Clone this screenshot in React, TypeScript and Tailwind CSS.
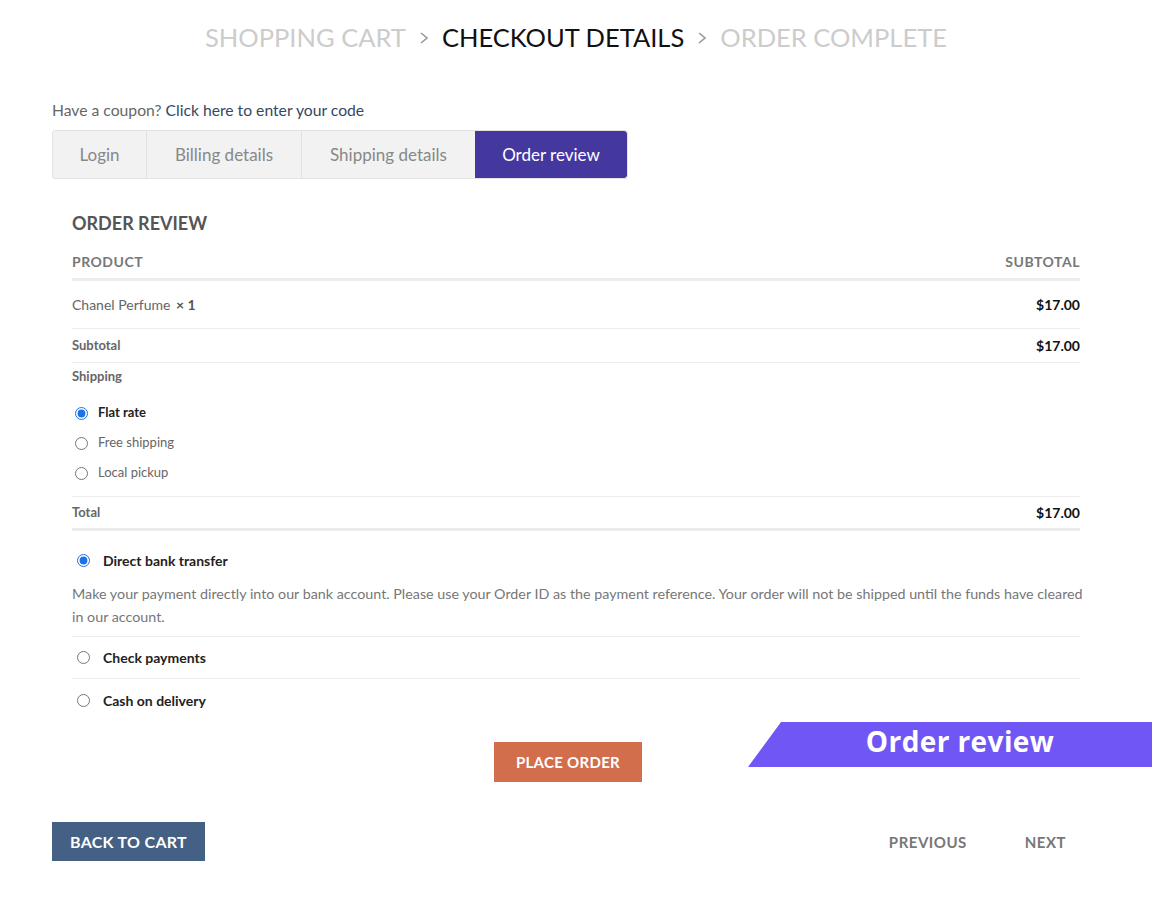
import React from "react";

const steps = ["Login", "Billing details", "Shipping details", "Order review"];

function Chevron() {
  return (
    <svg width="12" height="20" viewBox="0 0 12 20" className="mx-[12px] mt-[2px]">
      <path d="M3 5l6 5-6 5" fill="none" stroke="#999" strokeWidth="1.6" />
    </svg>
  );
}

function Radio({ name, checked }: { name: string; checked?: boolean }) {
  return (
    <input
      type="radio"
      name={name}
      defaultChecked={checked}
      className="m-0 h-[13px] w-[13px] accent-[#1a73e8]"
    />
  );
}

export default function App() {
  return (
    <div
      className="relative w-[1152px] h-[898px] bg-white overflow-hidden"
      style={{ fontFamily: "Lato, 'Liberation Sans', sans-serif" }}
    >
      {/* Breadcrumb */}
      <nav className="flex items-center justify-center pt-[18px] h-[56px] text-[25.5px] uppercase">
        <span className="text-[#cccccc]">Shopping Cart</span>
        <Chevron />
        <span className="text-[#111]">Checkout Details</span>
        <Chevron />
        <span className="text-[#cccccc]">Order Complete</span>
      </nav>

      <div className="px-[52px]">
        {/* Coupon */}
        <p className="mt-[44px] text-[15.7px] leading-[20px] text-[#666]">
          Have a coupon? <span className="text-[#334862]">Click here to enter your code</span>
        </p>

        {/* Tabs */}
        <div className="mt-[10px] flex w-[576px] h-[49px] rounded-[3px] border border-[#e2e2e2] bg-[#f2f2f2] overflow-hidden text-[17px]">
          <div className="w-[94px] flex items-center justify-center border-r border-[#e2e2e2] text-[#888]">Login</div>
          <div className="w-[155px] flex items-center justify-center border-r border-[#e2e2e2] text-[#888]">Billing details</div>
          <div className="w-[173px] flex items-center justify-center text-[#888]">Shipping details</div>
          <div className="flex-1 flex items-center justify-center bg-[#44389f] text-white rounded-r-[3px]">{steps[3]}</div>
        </div>

        {/* Order review */}
        <div className="px-5">
          <h3 className="mt-[33px] text-[18px] font-bold text-[#555] leading-[22px] uppercase">Order Review</h3>

          <div className="mt-[17px] flex justify-between text-[14px] font-bold tracking-[0.5px] text-[#777] uppercase pb-[6px] border-b-[3px] border-[#ececec]">
            <span>Product</span>
            <span>Subtotal</span>
          </div>

          <div className="flex justify-between items-center h-[48px] border-b border-[#ececec] text-[14px]">
            <span className="text-[#666]">
              Chanel Perfume <strong className="text-[#555] ml-[2px]">× 1</strong>
            </span>
            <span className="font-bold text-[#111]">$17.00</span>
          </div>

          <div className="flex justify-between items-center h-[34px] border-b border-[#ececec] text-[13px]">
            <span className="text-[#666] font-bold">Subtotal</span>
            <span className="text-[14px] font-bold text-[#111]">$17.00</span>
          </div>

          <div className="border-b border-[#ececec] pb-[8px]">
            <div className="pt-[5px] text-[13px] font-bold text-[#666] leading-[16px]">Shipping</div>
            <ul className="mt-[14px] flex flex-col text-[13px]">
              <li className="flex items-center gap-[10px] h-[30px] pl-[3px]">
                <Radio name="ship" checked />
                <span className="font-bold text-[#222]">Flat rate</span>
              </li>
              <li className="flex items-center gap-[10px] h-[30px] pl-[3px]">
                <Radio name="ship" />
                <span className="text-[#666]">Free shipping</span>
              </li>
              <li className="flex items-center gap-[10px] h-[30px] pl-[3px]">
                <Radio name="ship" />
                <span className="text-[#666]">Local pickup</span>
              </li>
            </ul>
          </div>

          <div className="flex justify-between items-center h-[34px] border-b-[3px] border-[#ececec] text-[13px]">
            <span className="text-[#666] font-bold">Total</span>
            <span className="text-[14px] font-bold text-[#111]">$17.00</span>
          </div>

          {/* Payment */}
          <div className="mt-[18px] border-b border-[#ececec] pb-[8px]">
            <label className="flex items-center gap-[13px] pl-[5px] h-[22px] text-[14px] font-bold text-[#222]">
              <Radio name="pay" checked />
              Direct bank transfer
            </label>
            <p className="mt-[11px] mr-[-6px] text-[14.3px] leading-[23px] text-[#777]">
              Make your payment directly into our bank account. Please use your Order ID as the payment reference. Your order will not be shipped until the funds have cleared in our account.
            </p>
          </div>
          <label className="flex items-center gap-[13px] pl-[5px] h-[42px] border-b border-[#ececec] text-[14px] font-bold text-[#222]">
            <Radio name="pay" />
            Check payments
          </label>
          <label className="flex items-center gap-[13px] pl-[5px] h-[42px] text-[14px] font-bold text-[#222]">
            <Radio name="pay" />
            Cash on delivery
          </label>

          <div className="mt-[21px] flex">
            <button className="ml-[422px] h-[40px] w-[148px] bg-[#d26e4b] text-white text-[15px] font-bold uppercase tracking-[0.3px]">
              Place Order
            </button>
          </div>
        </div>

        {/* Footer nav */}
        <div className="mt-[40px] flex items-center justify-between">
          <button className="h-[39px] w-[153px] bg-[#446084] text-white text-[16px] font-bold uppercase tracking-[0.3px]">
            Back to cart
          </button>
          <div className="flex items-center gap-[58px] pr-[34px] pt-[2px] text-[15px] font-bold uppercase tracking-[0.5px] text-[#777]">
            <span>Previous</span>
            <span>Next</span>
          </div>
        </div>
      </div>

      {/* Step banner */}
      <div
        className="absolute left-[748px] top-[722px] w-[404px] h-[45px] bg-[#7057f5] flex items-center justify-center pl-[20px] pb-[7px]"
        style={{ clipPath: "polygon(33px 0, 100% 0, 100% 100%, 0 100%)" }}
      >
        <span className="text-white text-[28px] font-bold tracking-[0.4px]" style={{ fontFamily: "'Open Sans', 'Noto Sans', sans-serif" }}>
          Order review
        </span>
      </div>
    </div>
  );
}
